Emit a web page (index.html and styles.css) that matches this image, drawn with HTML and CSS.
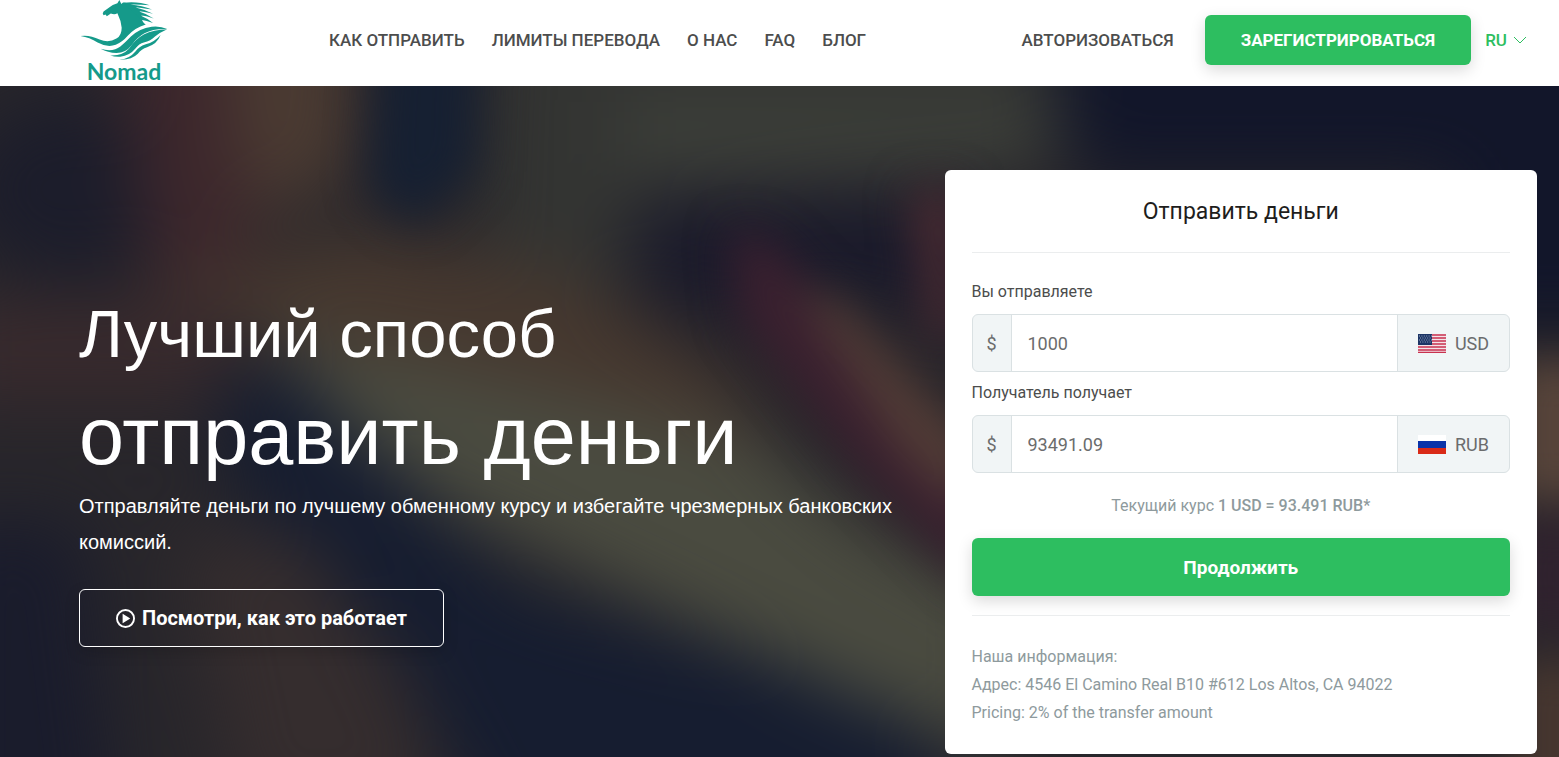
FILE: index.html
```html
<!DOCTYPE html>
<html lang="ru">

<head>
    <meta charset="UTF-8">
    <meta name="viewport" content="width=device-width, initial-scale=1.0">
    <title>Nomad</title>
    <link rel="stylesheet" href="styles.css">
</head>

<body>
    <header class="header">
        <a href="#" class="logo">
            <svg class="logo-mark" viewBox="27 0 270 185" aria-hidden="true">
                <path d="M148 0 L142 10 Q126 14 118 22 L100 35 Q95 41 100 46 L106 44 L110 49 L122 41 Q134 46 142 40 Q153 62 155 84 Q155 108 139 117 Q116 131 88 120 Q58 105 30 109 Q58 113 82 129 Q111 145 137 136 Q157 128 174 108 Q194 84 228 74 Q216 67 216 53 Q213 30 190 17 Q172 7 158 8 L154 12 Z" />
                <path d="M160 8 Q205 3 240 16 Q205 13 180 14 Q218 17 247 29 Q210 23 195 22 Q226 29 250 42 Q222 34 206 34 Q230 41 252 56 Q228 47 212 47 Q230 54 250 70 Q230 62 214 60 Z" />
                <path d="M91 148 Q128 159 151 141 Q168 127 183 111 Q208 86 246 81 Q272 78 293 88 Q252 86 224 101 Q202 113 185 137 Q168 160 139 161 Q113 160 91 148 Z" />
                <path d="M120 168 Q157 170 177 148 Q196 119 222 105 Q252 90 293 89 Q272 98 256 111 Q243 124 222 129 Q208 132 196 148 Q179 169 151 172 Q134 173 120 168 Z" />
                <path d="M148 181 Q178 179 196 157 Q207 140 228 134 Q254 128 273 106 Q263 133 232 143 Q215 148 204 163 Q184 183 148 181 Z" />
            </svg>
            <span class="logo-name">Nomad</span>
        </a>

        <nav class="menu">
            <a href="#">КАК ОТПРАВИТЬ</a>
            <a href="#">ЛИМИТЫ ПЕРЕВОДА</a>
            <a href="#">О НАС</a>
            <a href="#">FAQ</a>
            <a href="#">БЛОГ</a>
        </nav>

        <div class="account">
            <a href="#" class="login">АВТОРИЗОВАТЬСЯ</a>
            <button type="button" class="btn register">ЗАРЕГИСТРИРОВАТЬСЯ</button>
            <button type="button" class="lang">RU
                <svg viewBox="0 0 14 14" aria-hidden="true">
                    <path d="M1 4 L7 10 L13 4" />
                </svg>
            </button>
        </div>
    </header>

    <main class="hero">
        <svg class="hero-bg" viewBox="0 86 1559 671" preserveAspectRatio="none" aria-hidden="true">
            <defs>
                <filter id="blur" x="-20%" y="-20%" width="140%" height="140%" color-interpolation-filters="sRGB">
                    <feGaussianBlur stdDeviation="34" />
                </filter>
                <filter id="soft" x="-20%" y="-20%" width="140%" height="140%" color-interpolation-filters="sRGB">
                    <feGaussianBlur stdDeviation="22" />
                </filter>
            </defs>
            <rect y="86" width="1559" height="671" fill="#28262b" />
            <g filter="url(#blur)">
                <ellipse cx="70" cy="190" rx="110" ry="90" fill="#1c1d2b" />
                <path d="M110 0 H230 L260 330 H160 Z" fill="#3d272c" />
                <path d="M220 0 H360 L350 180 L250 220 Z" fill="#4b3b32" />
                <path d="M490 0 H1060 V170 L650 200 L620 300 L480 250 Z" fill="#333432" />
                <path d="M620 100 H1040 V165 H620 Z" fill="#3d403a" />
                <path d="M150 290 L350 230 L560 270 L720 370 L800 480 L560 430 L320 350 Z" fill="#46382f" />
                <path d="M-60 300 H230 V400 H-60 Z" fill="#382a2d" />
                <path d="M640 200 H1000 V330 L800 290 L740 330 L630 280 Z" fill="#1a1a2b" />
                <path d="M1040 0 H1700 V330 H1450 V180 H1080 Z" fill="#12162a" />
                <path d="M210 390 L300 360 L420 500 L520 590 L900 700 L1000 860 H500 L400 650 L240 500 Z" fill="#161d30" />
                <path d="M260 330 L420 360 L760 440 L860 520 L1000 600 V760 L840 690 L620 590 L450 510 L350 430 Z" fill="#4a4b40" />
                <path d="M180 540 L300 530 L400 680 L450 820 H240 Z" fill="#352d2e" />
                <path d="M-60 520 H80 L120 840 H-60 Z" fill="#1a1c2c" />
            </g>
            <g filter="url(#soft)">
                <path d="M380 20 H480 L475 170 L415 225 L370 190 Z" fill="#162032" />
                <path d="M730 230 L770 240 L980 470 L980 590 L860 470 L740 320 Z" fill="#3a202f" />
                <path d="M800 290 L840 300 L980 450 L960 510 L900 450 Z" fill="#523c36" />
                <path d="M910 190 H960 V340 H930 Z" fill="#4a2b31" />
                <path d="M1510 360 H1610 V500 H1510 Z" fill="#57443a" />
                <path d="M1510 520 H1610 V630 H1510 Z" fill="#30222e" />
                <path d="M1510 660 H1610 V820 H1510 Z" fill="#46362f" />
            </g>
        </svg>

        <section class="intro">
            <h1>Лучший способ <span>отправить деньги</span></h1>
            <p>Отправляйте деньги по лучшему обменному курсу и избегайте чрезмерных банковских комиссий.</p>
            <button type="button" class="btn watch">
                <svg viewBox="0 0 20 20" aria-hidden="true">
                    <circle cx="10" cy="10" r="9" />
                    <path d="M7 5 L15 10 L7 15 Z" />
                </svg>
                Посмотри, как это работает
            </button>
        </section>

        <form class="card">
            <h2>Отправить деньги</h2>
            <hr>
            <label for="send">Вы отправляете</label>
            <div class="field">
                <span class="sign">$</span>
                <input type="text" id="send" value="1000">
                <span class="currency">
                    <svg viewBox="0 0 28 19" aria-hidden="true">
                        <rect width="28" height="19" fill="#f4e3e8" />
                        <path d="M0 1H28M0 4H28M0 7H28M0 10H28M0 13H28M0 16H28M0 18.5H28" stroke="#c8324f" stroke-width="1.5" />
                        <rect width="14" height="11" fill="#1d3566" />
                        <path d="M1 2H14M2 4H14M1 6H14M2 8H14" stroke="#b9c4da" stroke-width="0.8" stroke-dasharray="1 1.4" />
                    </svg>
                    USD
                </span>
            </div>
            <label for="receive">Получатель получает</label>
            <div class="field">
                <span class="sign">$</span>
                <input type="text" id="receive" value="93491.09">
                <span class="currency">
                    <svg viewBox="0 0 28 19" aria-hidden="true">
                        <rect width="28" height="6" fill="#fff" />
                        <rect y="6" width="28" height="7" fill="#0a33a8" />
                        <rect y="13" width="28" height="6" fill="#d92a17" />
                    </svg>
                    RUB
                </span>
            </div>
            <p class="rate">Текущий курс <strong>1 USD = 93.491 RUB*</strong></p>
            <button type="button" class="btn next">Продолжить</button>
            <hr>
            <p class="info">
                Наша информация:<br>
                Адрес: 4546 El Camino Real B10 #612 Los Altos, CA 94022<br>
                Pricing: 2% of the transfer amount
            </p>
        </form>
    </main>
</body>

</html>
```

FILE: styles.css
```css
* {
    box-sizing: border-box;
}

body {
    margin: 0;
    min-height: 100vh;
    display: flex;
    flex-direction: column;
    font-family: Roboto, "Open Sans", sans-serif;
    font-size: 16px;
    color: #4c4d4d;
}

a {
    color: inherit;
    text-decoration: none;
}

button {
    font-family: inherit;
    cursor: pointer;
}

.header {
    display: flex;
    align-items: center;
    height: 86px;
    padding: 0 32px 6px 79px;
    background: #fff;
    font-size: 17px;
    font-weight: 500;
}

.logo {
    display: flex;
    flex-direction: column;
    align-items: center;
    width: 90px;
    color: #159a8a;
}

.logo-mark {
    width: 90px;
    height: 61px;
    fill: #159a8a;
}

.logo-name {
    font-family: Lato, sans-serif;
    font-size: 23px;
    font-weight: 700;
    line-height: 20px;
}

.menu {
    display: flex;
    gap: 27px;
    margin-left: 160px;
}

.account {
    display: flex;
    align-items: center;
    margin-left: auto;
}

.btn {
    border: none;
    border-radius: 6px;
    background: #2dbe60;
    color: #fff;
    font-weight: 700;
    box-shadow: 0 5px 15px rgba(0, 0, 0, 0.15);
}

.register {
    height: 50px;
    margin: 0 14px 0 31px;
    padding: 0 36px;
    font-size: 17px;
}

.lang {
    display: flex;
    align-items: center;
    gap: 6px;
    padding: 0;
    border: none;
    background: none;
    color: #2dbe60;
    font-size: 17px;
    font-weight: 500;
}

.lang svg {
    width: 14px;
    height: 14px;
    fill: none;
    stroke: #2dbe60;
}

.hero {
    position: relative;
    flex: 1;
    display: grid;
    grid-template-columns: 7fr 5fr;
    gap: 36px;
    align-items: start;
    padding: 84px 22px 3px 79px;
    background: #22232b;
    overflow: hidden;
}

.hero-bg {
    position: absolute;
    top: 0;
    left: 0;
    width: 100%;
    height: 100%;
}

.intro,
.card {
    position: relative;
}

.intro {
    padding-top: 112px;
    color: #fff;
    font-family: "Liberation Sans", Arial, sans-serif;
}

.intro h1 {
    margin: 0;
    font-size: 67px;
    font-weight: 400;
    line-height: 103px;
}

.intro h1 span {
    display: block;
    font-size: 81px;
}

.intro p {
    margin: 0 0 29px;
    font-size: 20px;
    line-height: 36px;
}

.watch {
    display: flex;
    align-items: center;
    gap: 7px;
    height: 58px;
    padding: 0 36px;
    border: 1px solid #fff;
    background: none;
    font-family: Roboto, sans-serif;
    font-size: 20px;
}

.watch svg {
    width: 19px;
    height: 19px;
    fill: none;
    stroke: #fff;
    stroke-width: 2;
}

.watch path {
    fill: #fff;
    stroke: none;
}

.card {
    padding: 26px 27px 27px;
    border-radius: 6px;
    background: #fff;
}

.card h2 {
    margin: 0;
    color: #1e1d1c;
    font-size: 23px;
    font-weight: 400;
    line-height: 32px;
    text-align: center;
}

.card hr {
    margin: 24px 0 25px;
    border: none;
    border-top: 1px solid #ebedee;
}

.card label {
    display: block;
    margin: 7px 0 8px;
    line-height: 28px;
}

.field {
    display: flex;
    height: 58px;
    border: 1px solid #dae1e3;
    border-radius: 6px;
    background: #f1f5f6;
    color: #6b6c6d;
    font-size: 18px;
    overflow: hidden;
}

.sign,
.currency {
    display: flex;
    align-items: center;
    justify-content: center;
}

.sign {
    width: 38px;
}

.field input {
    flex: 1;
    min-width: 0;
    padding: 0 16px;
    border: solid #dae1e3;
    border-width: 0 1px;
    background: #fff;
    color: inherit;
    font: inherit;
}

.currency {
    gap: 9px;
    width: 111px;
}

.currency svg {
    width: 28px;
    height: 19px;
}

.rate,
.info {
    margin: 19px 0 18px;
    color: #8e9a9d;
    line-height: 28px;
}

.rate {
    text-align: center;
}

.rate strong {
    font-weight: 500;
}

.next {
    width: 100%;
    height: 58px;
    font-size: 19px;
}

.card .next + hr {
    margin: 19px 0 27px;
}

.card .info {
    margin: 0;
}
```
